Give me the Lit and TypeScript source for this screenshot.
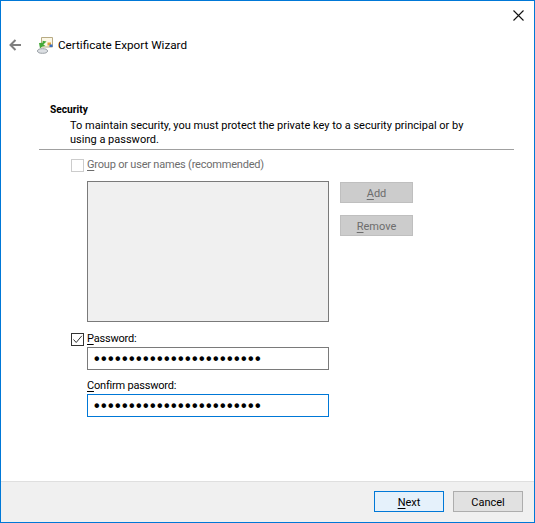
import { LitElement, html, css } from "lit";
import { customElement } from "lit/decorators.js";

const DOTS = "•".repeat(24);

@customElement("app-root")
export class AppRoot extends LitElement {
  static styles = css`
    :host {
      display: flex;
      flex-direction: column;
      box-sizing: border-box;
      width: 535px;
      height: 523px;
      border: 1px solid #0078d7;
      background: #fff;
      font: 11px/16px Roboto, "Open Sans", sans-serif;
      color: #000;
    }
    u { text-underline-offset: 2px; text-decoration-thickness: 1px; }
    .top { display: flex; justify-content: flex-end; height: 29px; padding: 8px 9px 0 0; box-sizing: border-box; }
    .close { width: 13px; height: 13px; display: block; }
    .nav { display: flex; align-items: center; height: 30px; padding-left: 8px; }
    .back { width: 12px; height: 12px; display: block; }
    .logo { width: 18px; height: 18px; display: block; margin-left: 16px; }
    .title { margin-left: 3px; font-size: 11.7px; }
    .content { flex: 1; display: flex; flex-direction: column; padding: 42px 20px 0 38px; }
    .section { font-weight: 700; font-size: 10.2px; line-height: 14px; padding: 1px 0 0 11px; }
    .desc { padding: 0 40px 0 31px; margin-top: 2px; line-height: 14px; }
    .rule { height: 1px; background: #a0a0a0; margin-top: 2px; }
    .form { display: grid; grid-template-columns: 16px 242px 73px; padding: 8px 0 0 32px; }
    .check-row { grid-column: 1 / -1; display: flex; align-items: center; gap: 3px; height: 14px; letter-spacing: -0.2px; }
    .box { box-sizing: border-box; width: 13px; height: 13px; border: 1px solid #333; background: #fff; display: block; }
    .box.off { border-color: #ccc; }
    .off-text { color: #6d6d6d; }
    .list { grid-column: 2; box-sizing: border-box; height: 141px; margin-top: 9px; border: 1px solid #7a7a7a; background: #f0f0f0; }
    .side { grid-column: 3; margin-top: 10px; margin-left: 11px; display: flex; flex-direction: column; gap: 12px; width: 73px; }
    .btn { box-sizing: border-box; height: 21px; padding-top: 2px; display: flex; align-items: center; justify-content: center; border: 1px solid #adadad; background: #e1e1e1; }
    .btn.dis { background: #ccc; border-color: #bfbfbf; color: #6d6d6d; }
    .pw { margin-top: 10px; }
    .field { grid-column: 2; box-sizing: border-box; height: 23px; border: 1px solid #7a7a7a; display: flex; align-items: center; padding-left: 6px; margin-top: 1px; font: 700 16px/1 "Liberation Sans", sans-serif; letter-spacing: 1.4px; overflow: hidden; }
    .field.focus { border-color: #0078d7; margin-top: 0; }
    .lbl { grid-column: 2; margin-top: 8px; height: 16px; letter-spacing: -0.2px; }
    .footer { box-sizing: border-box; height: 41px; background: #f0f0f0; border-top: 1px solid #dfdfdf; display: flex; justify-content: flex-end; gap: 9px; padding: 9px 11px 0 0; }
    .footer .btn { width: 70px; }
    .btn.next { background: #e5f1fb; border-color: #0078d7; }
  `;

  render() {
    return html`
      <div class="top">
        <svg class="close" viewBox="0 0 13 13"><path d="M1.5 1.5l10 10M11.5 1.5l-10 10" stroke="#111" stroke-width="1.1" fill="none"/></svg>
      </div>
      <div class="nav">
        <svg class="back" viewBox="0 0 12 12"><path d="M12 6H2M6.5 1L1.5 6l5 5" stroke="#7f7f7f" stroke-width="2" fill="none"/></svg>
        <svg class="logo" viewBox="0 0 18 18">
          <path d="M4.5 1.5h11v9.5h-11z" fill="#fbf7e6" stroke="#b8ab84"/>
          <rect x="10.5" y="6.5" width="3.5" height="3" fill="#e2a33a"/>
          <rect x="12.5" y="8.5" width="3" height="2.5" fill="#3a6fc4"/>
          <ellipse cx="5.5" cy="15" rx="5" ry="2.3" fill="#dcdfe3" stroke="#9aa0a6"/>
          <path d="M9.5 5.5L5.6 4.7v2L2 7l1 5.5 2.4-2 3-.5-2-1.5z" fill="#43a838"/>
        </svg>
        <span class="title">Certificate Export Wizard</span>
      </div>
      <div class="content">
        <div class="section">Security</div>
        <div class="desc">To maintain security, you must protect the private key to a security principal or by using a password.</div>
        <div class="rule"></div>
        <div class="form">
          <div class="check-row off-text"><span class="box off"></span><span><u>G</u>roup or user names (recommended)</span></div>
          <div class="list"></div>
          <div class="side">
            <div class="btn dis"><span><u>A</u>dd</span></div>
            <div class="btn dis"><span><u>R</u>emove</span></div>
          </div>
          <div class="check-row pw">
            <svg class="box" viewBox="0 0 11 11"><path d="M1.5 5.5l2.7 3L9.8 1.8" stroke="#333" stroke-width="1" fill="none"/></svg>
            <span><u>P</u>assword:</span>
          </div>
          <div class="field">${DOTS}</div>
          <div class="lbl"><u>C</u>onfirm password:</div>
          <div class="field focus">${DOTS}</div>
        </div>
      </div>
      <div class="footer">
        <div class="btn next"><span><u>N</u>ext</span></div>
        <div class="btn">Cancel</div>
      </div>
    `;
  }
}
